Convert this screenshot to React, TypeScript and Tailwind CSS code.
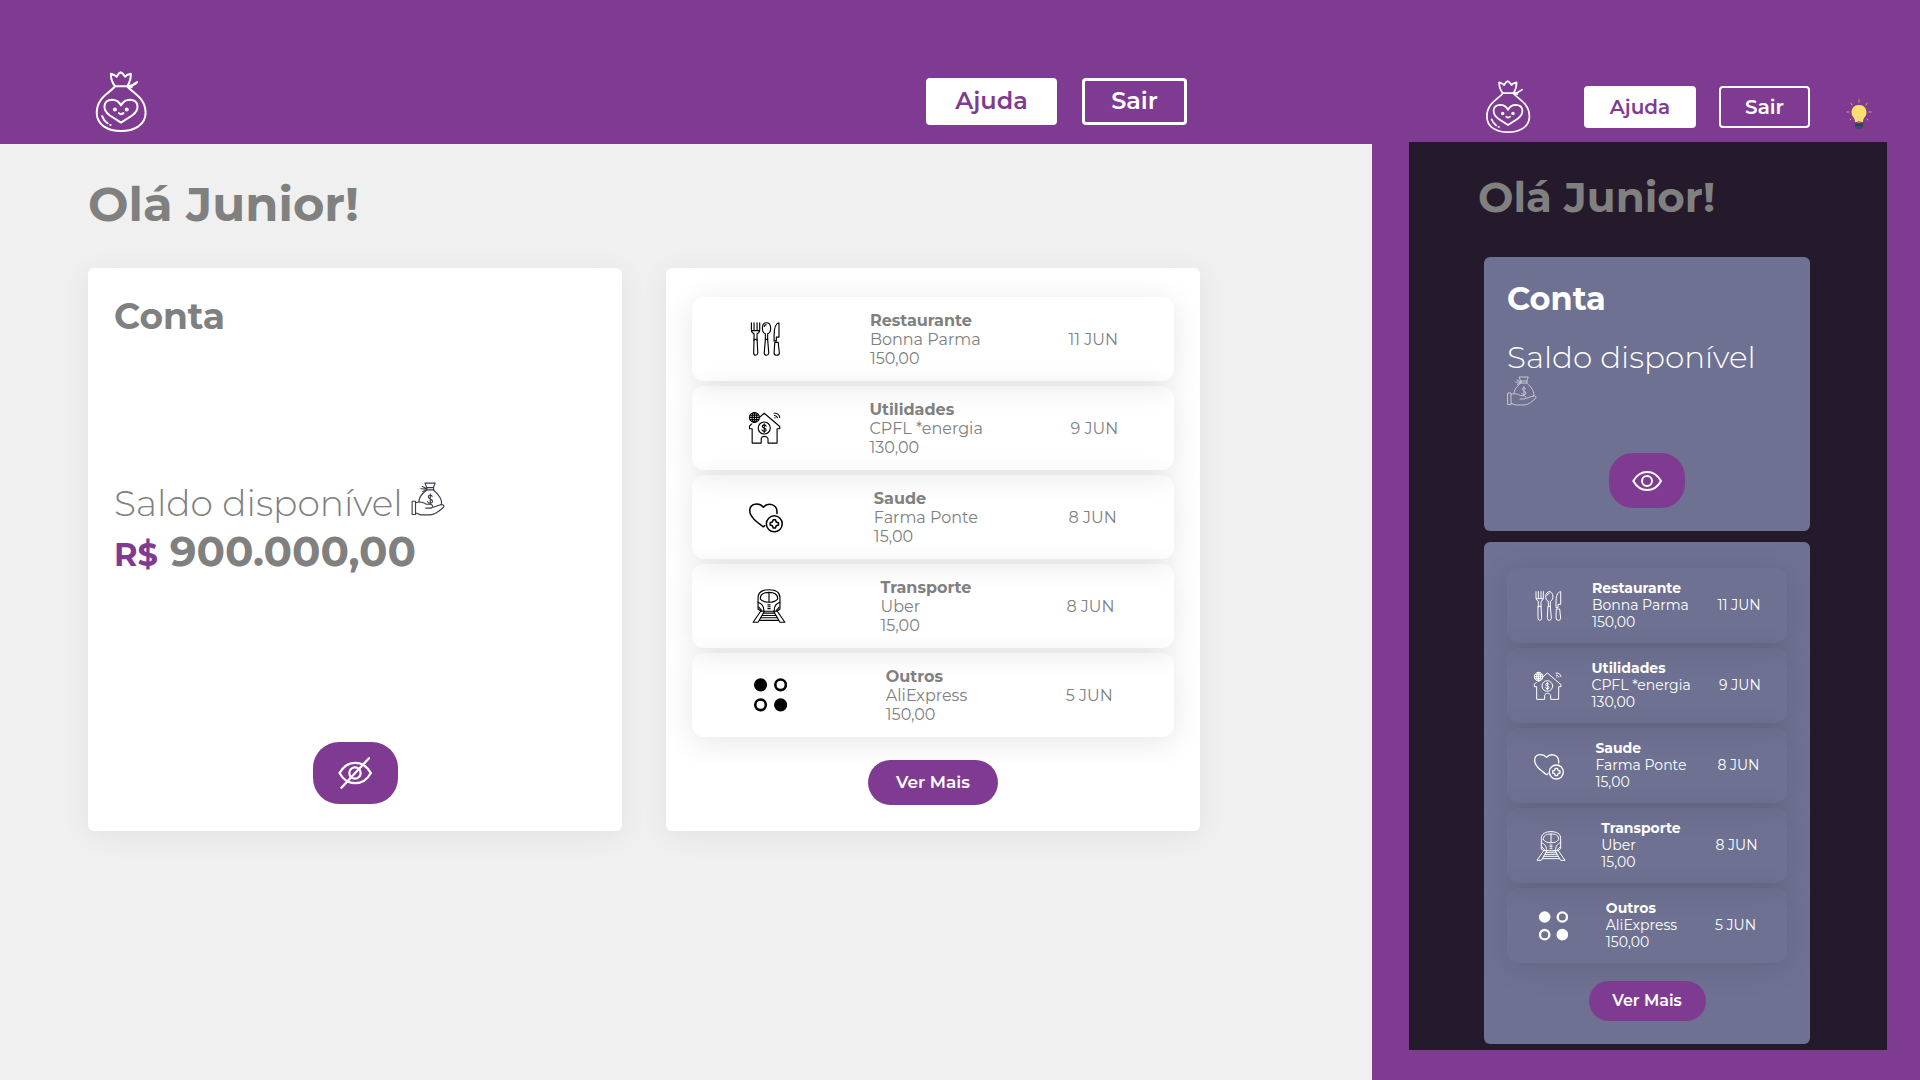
import type { ReactNode } from "react";

type IconProps = { className?: string };

function Drawing({ viewBox, className, width = 4, children }: { viewBox: string; className?: string; width?: number; children: ReactNode }) {
  return (
    <svg
      viewBox={viewBox}
      className={className}
      fill="none"
      stroke="currentColor"
      strokeWidth={width}
      strokeLinecap="round"
      strokeLinejoin="round"
      aria-hidden="true"
    >
      {children}
    </svg>
  );
}

function Logo({ className }: IconProps) {
  return (
    <Drawing viewBox="106 64 154 184" className={className} width={6}>
      <path d="M153 72 163 76 170 81 176 72 182 68 188 72 195 81 201 76 212 72C213 88 209 97 202 109H165C157 98 152 88 153 72Z" />
      <path d="M203 110C217 109 224 103 231 97M205 110 215 112" />
      <path d="M165 110C148 130 111 144 111 188C111 225 145 242 183 242C221 242 256 225 256 188C256 144 219 130 202 110" />
      <path d="M183 217 150 196C125 178 131 150 156 149C170 149 178 156 183 166C188 156 196 149 210 149C235 150 241 178 216 196Z" />
      <path d="M177 189Q183 195 190 189" />
      <path d="M127 198Q132 212 143 219M151 224H152" />
      <circle cx="165" cy="178" r="3" fill="currentColor" />
      <circle cx="200" cy="178" r="3" fill="currentColor" />
    </Drawing>
  );
}

function MoneyHand({ className }: IconProps) {
  return (
    <Drawing viewBox="320 406 90 90" className={className} width={3}>
      <path d="M357 409H384L379 421H362ZM362 421V427H380V421M362 424 350 418M362 425 346 424M361 427 351 431" />
      <path d="M361 428C347 438 341 450 341 459M380 428C394 439 404 455 400 466" />
      <path d="M376 444C373 439 365 441 366 446C366 451 377 451 377 457C377 463 367 464 364 458M371 438V465" />
      <path d="M323 457H332V492H323ZM333 461C344 456 354 461 361 465H373Q381 470 374 475H359" />
      <path d="M379 473 398 466Q410 465 406 473C395 482 386 492 371 493H346L333 488" />
    </Drawing>
  );
}

function Cutlery({ className }: IconProps) {
  return (
    <Drawing viewBox="400 182 90 90" className={className} width={3}>
      <path d="M409 184V203Q409 210 416 213V230M431 184V203Q431 210 424 213V230M416 184V204M424 184V204M411 205H429" />
      <path d="M416 228H424L426 264Q425 270 420 270Q415 270 415 264Z" />
      <path d="M449 184C435 184 435 209 446 213V228M449 184C463 184 463 209 452 213V228" />
      <path d="M446 228H452L455 264Q454 270 449 270Q443 270 443 264ZM443 194Q444 190 448 189" />
      <path d="M482 184C472 186 469 198 469 218V232H475V222H482ZM471 236H480L483 264Q483 270 476 270Q469 270 469 264Z" />
    </Drawing>
  );
}

function HouseMoney({ className }: IconProps) {
  return (
    <Drawing viewBox="398 421 90 90" className={className} width={3}>
      <path d="M427 439 441 427 482 462V468H475V506H451V494C448 486 435 486 433 494V506H409V468H402V461L408 455" />
      <circle cx="441" cy="466" r="16" />
      <path d="M446 461C444 456 436 457 436 462C436 467 446 465 446 471C446 476 437 476 435 471M441 455V478" />
      <circle cx="415" cy="438" r="13" />
      <ellipse cx="415" cy="438" rx="6" ry="13" />
      <path d="M415 425V451M402 438H428M404 432H426M404 444H426" />
      <path d="M467 427C475 426 481 431 482 438M468 433C472 433 475 436 476 439M469 439H470" />
    </Drawing>
  );
}

function HeartPlus({ className }: IconProps) {
  return (
    <Drawing viewBox="400 656 90 90" className={className} width={4}>
      <path d="M442 724 438 727C420 714 402 701 402 684C402 664 427 662 438 675C450 661 474 667 474 687V692" />
      <circle cx="467" cy="719" r="21" />
      <path d="M464 708H470L472 714 478 716V722L472 724 470 730H464L462 724 456 722V716L462 714Z" />
    </Drawing>
  );
}

function Train({ className }: IconProps) {
  return (
    <Drawing viewBox="408 89 90 90" className={className} width={3}>
      <path d="M424 142V112C424 97 436 91 453 91C470 91 482 97 482 112V142L474 148H432Z" />
      <path d="M430 115C430 102 438 98 453 98C468 98 476 102 476 115C471 122 464 124 453 124C442 124 435 122 430 115ZM453 98V124" />
      <path d="M424 124C436 128 440 136 439 148M482 124C470 128 466 136 467 148M426 137 434 146M480 137 472 146M450 131H456M450 136H456M450 141H456" />
      <path d="M431 148 411 177H424L441 148M475 148 495 177H482L465 148" />
      <path d="M438 153H468M435 159H471M431 165H475M428 172H478" />
    </Drawing>
  );
}

function Dots({ className }: IconProps) {
  return (
    <Drawing viewBox="413 329 90 90" className={className} width={7}>
      <circle cx="433" cy="347" r="14" fill="currentColor" />
      <circle cx="486" cy="347" r="14" />
      <circle cx="433" cy="400" r="14" />
      <circle cx="486" cy="400" r="14" fill="currentColor" />
    </Drawing>
  );
}

function Eye({ className }: IconProps) {
  return (
    <Drawing viewBox="698 673 90 90" className={className} width={6}>
      <path d="M702 718C722 682 765 682 785 718C765 754 722 754 702 718Z" />
      <circle cx="743" cy="718" r="15" />
    </Drawing>
  );
}

function EyeOff({ className }: IconProps) {
  return (
    <Drawing viewBox="698 673 90 90" className={className} width={6}>
      <path d="M702 718C722 682 765 682 785 718C765 754 722 754 702 718Z" />
      <circle cx="743" cy="718" r="15" />
      <path d="M780 679 707 757" />
    </Drawing>
  );
}

function Bulb({ className }: IconProps) {
  return (
    <svg viewBox="0 0 26 31" className={className} aria-hidden="true">
      <path d="M13 1V3M5 4 6 6M21 4 20 6M1 13H3M23 13H25M4 21 5 20M22 21 21 20" stroke="#e8a05c" strokeLinecap="round" />
      <path d="M13 6C8 6 5.500 9.500 5.500 13.500C5.500 18 9 18 9 23H17C17 18 20.500 18 20.500 13.500C20.500 9.500 18 6 13 6Z" fill="#ffe169" />
      <path d="M10.500 16V18L11.500 22H14.500L15.500 18V16L13 18Z" fill="#e5d9a0" />
      <path d="M11.500 22H14.500V24H11.500Z" fill="#e76a55" />
      <path d="M9 24H17V28Q16 30 13 30Q10 30 9 28Z" fill="#35505f" />
      <path d="M9 26H17" stroke="#223a4a" />
    </svg>
  );
}

const transactions = [
  { title: "Restaurante", place: "Bonna Parma", value: "150,00", date: "11 JUN", Icon: Cutlery },
  { title: "Utilidades", place: "CPFL *energia", value: "130,00", date: "9 JUN", Icon: HouseMoney },
  { title: "Saude", place: "Farma Ponte", value: "15,00", date: "8 JUN", Icon: HeartPlus },
  { title: "Transporte", place: "Uber", value: "15,00", date: "8 JUN", Icon: Train },
  { title: "Outros", place: "AliExpress", value: "150,00", date: "5 JUN", Icon: Dots },
];

function DesktopView() {
  return (
    <section className="min-w-0 bg-[#f0f0f0]">
      <header className="flex h-36 items-center bg-[#7f3b91] pt-[60px] pr-[185px] pl-[95px] text-white">
        <Logo className="h-[62px] w-[52px]" />
        <nav className="mb-0.5 ml-auto flex gap-[25px]">
          <button className="h-[47px] w-[131px] rounded-[4px] bg-white text-2xl font-semibold text-[#7f3b91]">Ajuda</button>
          <button className="h-[47px] w-[105px] rounded-[4px] border-3 border-white text-2xl font-semibold">Sair</button>
        </nav>
      </header>
      <main className="pt-9 pr-[172px] pl-[88px] text-[#808080]">
        <h1 className="mb-10 text-5xl leading-12 font-bold">Olá Junior!</h1>
        <div className="grid grid-cols-2 gap-11">
          <article className="flex flex-col justify-between rounded-md bg-white px-[26px] pt-7 pb-[27px] shadow-[0_5px_30px_rgba(0,0,0,0.06)]">
            <h2 className="text-4xl leading-10 font-bold">Conta</h2>
            <div className="pb-5">
              <p className="flex items-center gap-2 text-4xl leading-12 font-light">
                Saldo disponível
                <MoneyHand className="mb-2 size-[34px] text-[#3c3f48]" />
              </p>
              <p className="text-[42px] leading-12 font-bold">
                <span className="text-[32px] text-[#7f3b91]">R$</span> 900.000,00
              </p>
            </div>
            <button aria-label="Ocultar saldo" className="flex h-[62px] w-[85px] items-center justify-center self-center rounded-[26px] bg-[#7f3b91] text-white">
              <EyeOff className="size-[34px]" />
            </button>
          </article>
          <article className="flex flex-col rounded-md bg-white px-[26px] pt-[29px] pb-[26px] shadow-[0_5px_30px_rgba(0,0,0,0.06)]">
            <ul className="flex flex-col gap-[5px]">
              {transactions.map(({ title, place, value, date, Icon }) => (
                <li key={title} className="flex h-[84px] items-center justify-around rounded-xl px-3 text-base leading-[19px] shadow-[0_5px_30px_rgba(0,0,0,0.1)]">
                  <Icon className="size-[34px] text-black" />
                  <div>
                    <h3 className="font-bold">{title}</h3>
                    <p>{place}</p>
                    <p>{value}</p>
                  </div>
                  <span>{date}</span>
                </li>
              ))}
            </ul>
            <button className="mt-[23px] h-[45px] w-[130px] self-center rounded-full bg-[#7f3b91] text-[17px] font-semibold text-white">Ver Mais</button>
          </article>
        </div>
      </main>
    </section>
  );
}

function MobileView() {
  return (
    <section className="min-w-0 bg-[#7f3b91] pr-[33px] pb-[30px] pl-[37px] text-white">
      <header className="flex h-[142px] items-center pt-[71px] pr-[15px] pl-[76px]">
        <Logo className="h-[54px] w-[46px]" />
        <nav className="ml-auto flex gap-[23px]">
          <button className="h-[42px] w-[112px] rounded-[4px] bg-white text-xl font-semibold text-[#7f3b91]">Ajuda</button>
          <button className="h-[42px] w-[91px] rounded-[4px] border-2 border-white text-xl font-semibold">Sair</button>
        </nav>
        <button aria-label="Alternar tema" className="mt-4 ml-9">
          <Bulb className="h-[31px] w-[26px]" />
        </button>
      </header>
      <main className="bg-[#251a2b] pt-[33px] pr-[77px] pb-1.5 pl-[75px]">
        <h1 className="mb-[38px] -ml-1.5 text-[42px] leading-11 font-bold whitespace-nowrap text-[#808080]">Olá Junior!</h1>
        <article className="flex flex-col rounded-md bg-[#6e7191] px-[23px] pt-[22px] pb-[23px]">
          <h2 className="text-[32px] leading-10 font-bold">Conta</h2>
          <p className="mt-[19px] text-[31px] leading-[38px] font-light whitespace-nowrap">Saldo disponível</p>
          <MoneyHand className="size-[30px] text-[#c9c7cb]" />
          <button aria-label="Mostrar saldo" className="mt-[47px] flex h-[55px] w-[76px] items-center justify-center self-center rounded-[24px] bg-[#7f3b91]">
            <Eye className="size-[30px]" />
          </button>
        </article>
        <article className="mt-[11px] flex flex-col rounded-md bg-[#6e7191] px-[23px] pt-[26px] pb-[23px]">
          <ul className="flex flex-col gap-[5px]">
            {transactions.map(({ title, place, value, date, Icon }) => (
              <li key={title} className="flex h-[75px] items-center justify-around rounded-xl px-3 text-sm leading-[17px] shadow-[0_5px_30px_rgba(0,0,0,0.1)]">
                <Icon className="size-[30px]" />
                <div>
                  <h3 className="font-bold">{title}</h3>
                  <p>{place}</p>
                  <p>{value}</p>
                </div>
                <span>{date}</span>
              </li>
            ))}
          </ul>
          <button className="mt-[18px] h-10 w-[117px] self-center rounded-full bg-[#7f3b91] text-base font-semibold">Ver Mais</button>
        </article>
      </main>
    </section>
  );
}

export default function App() {
  return (
    <div className="grid min-h-screen grid-cols-[1372fr_548fr] bg-[#7f3b91] font-['Montserrat','Inter',sans-serif]">
      <DesktopView />
      <MobileView />
    </div>
  );
}
